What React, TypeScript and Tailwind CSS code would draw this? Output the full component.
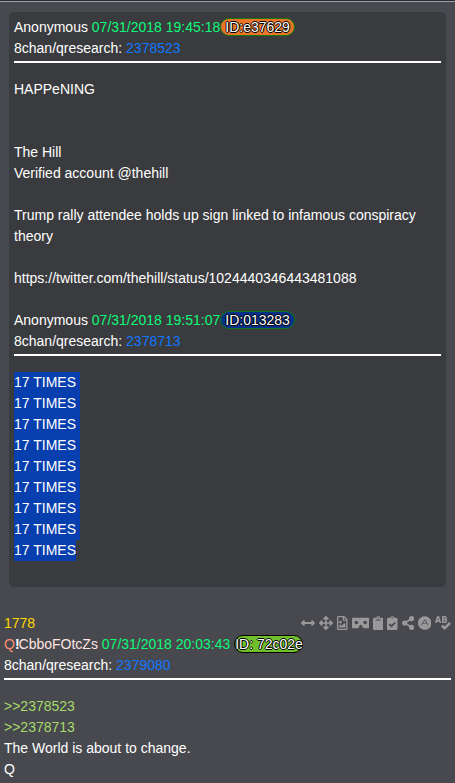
import type { ReactNode } from "react";
import {
    FaAdn,
    FaArrowsAlt,
    FaArrowsAltH,
    FaClipboard,
    FaClipboardCheck,
    FaRegFileImage,
    FaShareAlt,
    FaSpellCheck,
    FaVrCardboard,
} from "react-icons/fa";

const IdBadge = ({ className, children }: { className: string; children: ReactNode }) => (
    <span
        className={`inline-block h-[18px] rounded-[9px] border leading-4 whitespace-nowrap [text-shadow:-1px_0_0_#000,0_1px_0_#000,1px_0_0_#000,0_-1px_0_#000] ${className}`}
    >
        {children}
    </span>
);

const BoardLine = ({ post }: { post: string }) => (
    <div>
        8chan/qresearch: <a className="text-[#1177ff]">{post}</a>
    </div>
);

const Divider = () => <div className="mt-0.5 mb-4 h-0.5 bg-white" />;

const Toolbar = () => (
    <div className="-mt-0.5 flex items-center gap-[3.89px] text-[#999999]">
        <FaArrowsAltH className="size-3.5" />
        <FaArrowsAlt className="size-3.5" />
        <FaRegFileImage className="h-3.5 w-[10.5px]" />
        <FaVrCardboard className="h-3.5 w-[17.5px]" />
        <FaClipboard className="h-3.5 w-[10.5px]" />
        <FaClipboardCheck className="h-3.5 w-[10.5px]" />
        <FaShareAlt className="h-3.5 w-[12.25px]" />
        <FaAdn className="h-3.5 w-[13.56px]" />
        <FaSpellCheck className="h-3.5 w-[15.75px]" />
    </div>
);

const App = () => {
    return (
        <main className="h-[783px] overflow-hidden border-t border-[#29292e] bg-[#48494e] font-['Liberation_Sans',Arial,sans-serif] text-sm leading-[21px] text-white">
            <div className="h-px bg-[#a0a0a8]" />

            {/* Quoted posts */}
            <section className="mt-2.5 mr-[9px] ml-[9px] h-[575px] rounded-[5px] bg-[#3a3b3e] px-[5px] pt-[5px]">
                <div className="h-[21px] whitespace-nowrap">
                    Anonymous <span className="text-[#0dfa78]">07/31/2018 19:45:18</span>
                    <IdBadge className="w-[75px] border-[#187a0c] bg-[#e8752a] pl-1">ID:e37629</IdBadge>
                </div>
                <BoardLine post="2378523" />
                <Divider />
                <p>HAPPeNING</p>
                <p className="mt-[42px]">The Hill</p>
                <p>Verified account @thehill</p>
                <p className="mt-[21px]">
                    Trump rally attendee holds up sign linked to infamous conspiracy theory
                </p>
                <p className="my-[21px]">https://twitter.com/thehill/status/1024440346443481088</p>

                <div className="h-[21px] whitespace-nowrap">
                    Anonymous <span className="text-[#0dfa78]">07/31/2018 19:51:07</span>
                    <IdBadge className="w-[75px] border-[#087a18] bg-[#04318a] pl-1">ID:013283</IdBadge>
                </div>
                <BoardLine post="2378713" />
                <Divider />
                {Array.from({ length: 9 }, (_, i) => (
                    <p key={i} className="w-[66px] bg-[#083fae] last:w-[62px]">17 TIMES</p>
                ))}
            </section>

            {/* Post 1778 */}
            <section className="mt-[26px] px-1">
                <div className="flex h-[21px] items-center justify-between">
                    <span className="text-[#ffd700]">1778</span>
                    <Toolbar />
                </div>
                <div className="h-[21px] whitespace-nowrap">
                    <span className="text-[#fa8e72]">Q</span>
                    <b className="-mr-px">!</b>
                    <span className="text-[#ffe4e1]">CbboFOtcZs</span>{" "}
                    <span className="text-[#0dfa78]">07/31/2018 20:03:43</span>{" "}
                    <IdBadge className="w-[69px] border-black bg-[#70bf2c]">ID: 72c02e</IdBadge>
                </div>
                <BoardLine post="2379080" />
                <Divider />
                <p className="text-[#a6d96a]">&gt;&gt;2378523</p>
                <p className="text-[#a6d96a]">&gt;&gt;2378713</p>
                <p>The World is about to change.</p>
                <p>Q</p>
            </section>
        </main>
    );
};

export default App;
